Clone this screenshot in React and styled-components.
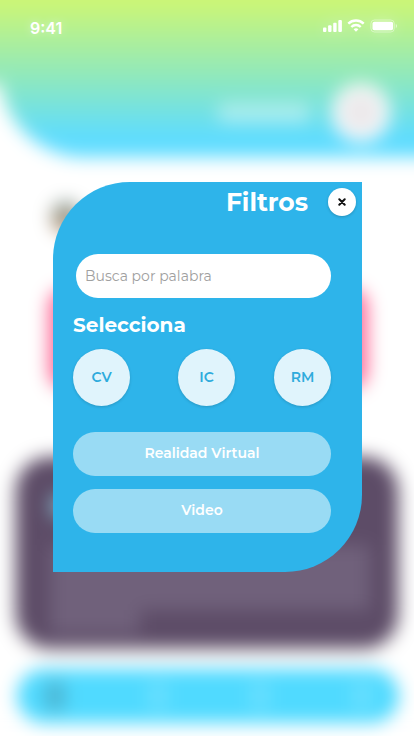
import React from "react";
import styled, { createGlobalStyle } from "styled-components";

const GlobalStyle = createGlobalStyle`
  *, *::before, *::after { box-sizing: border-box; }
  body {
    margin: 0;
    background: #fff;
    font-family: Montserrat, Inter, "Liberation Sans", sans-serif;
  }
  button, input { font: inherit; }
`;

/* The page and the dialog layer share one grid cell. */
const Screen = styled.div`
  display: grid;
  grid-template-columns: minmax(0, 1fr);
  min-height: 100vh;
  overflow: hidden;
`;

/* Bleeds 30px past the window so that the blur stays even at its edges. */
const Page = styled.div`
  grid-area: 1 / 1;
  display: flex;
  flex-direction: column;
  margin: -30px -30px 0;
  background: #fff;
  filter: blur(9px);
`;

const HeaderBand = styled.div`
  display: flex;
  align-items: flex-start;
`;

const HeaderFill = styled.div`
  background: linear-gradient(#cdf674 30px, #8be7c2 112px, #5edcff 168px) top / 100% 187px;
`;

const HeaderBleed = styled(HeaderFill)`
  width: 30px;
  height: 114px;
`;

const PageHeader = styled(HeaderFill)`
  flex: 1;
  display: flex;
  justify-content: flex-end;
  align-items: flex-end;
  gap: 22px;
  height: 187px;
  padding: 0 54px 16px;
  border-bottom-left-radius: 84px;
`;

const HeaderTitle = styled.div`
  width: 92px;
  height: 20px;
  margin-bottom: 18px;
  border-radius: 6px;
  background: rgba(255, 255, 255, 0.4);
`;

const HeaderButton = styled.div`
  width: 58px;
  height: 58px;
  border-radius: 50%;
  background: radial-gradient(#ebe6e8 20%, #f6f8fa 65%);
  box-shadow: 0 3px 6px rgba(255, 255, 255, 0.5);
`;

const Avatar = styled.div`
  width: 30px;
  height: 32px;
  margin: 44px 0 0 81px;
  border-radius: 50%;
  background: linear-gradient(#8fa9a8, #b88c68);
`;

const PinkCard = styled.div`
  height: 99px;
  margin: 56px 77px 0 79px;
  border-radius: 16px;
  background: #ff6896;
  box-shadow: 0 6px 12px rgba(0, 0, 0, 0.05);
`;

const DarkCard = styled.div`
  display: flex;
  flex-direction: column;
  height: 191px;
  margin: 69px 46px 0;
  padding: 36px 28px 14px 34px;
  border-radius: 34px;
  background: #5d4c67;
  box-shadow: 0 2px 8px rgba(0, 0, 0, 0.2);
`;

const Dot = styled.div`
  width: 22px;
  height: 26px;
  border-radius: 50%;
  background: #7fa9bd;
`;

const TextBlock = styled.div`
  width: ${(p) => p.$width};
  height: ${(p) => p.$height}px;
  margin-top: ${(p) => p.$top || 0}px;
  background: #70617b;
`;

const BottomBar = styled.div`
  display: flex;
  align-items: center;
  justify-content: space-between;
  height: 54px;
  margin: 21px 45px 12px 47px;
  padding: 0 28px;
  border-radius: 27px;
  background: #50daff;
`;

const BarIcon = styled.div`
  width: 20px;
  height: 30px;
  border-radius: 8px;
  background: #4db5d2;
`;

const BarMark = styled.div`
  width: 18px;
  height: 26px;
  background: #6be0ff;
`;

const Overlay = styled.div`
  grid-area: 1 / 1;
  z-index: 1;
  display: flex;
  flex-direction: column;
`;

const StatusBar = styled.div`
  display: flex;
  justify-content: space-between;
  align-items: center;
  height: 56px;
  padding: 0 17px 0 30px;
  color: #fff;
`;

const Time = styled.span`
  font: 600 16px/20px Inter, sans-serif;
  text-shadow: 0 0 10px rgba(255, 255, 255, 0.5);
`;

const StatusIcons = styled.svg`
  width: 76px;
  height: 16px;
  margin-bottom: 4px;
  overflow: visible;
  filter: drop-shadow(0 0 8px rgba(255, 255, 255, 0.4));
`;

const Dialog = styled.form`
  margin: 126px 52px 0 53px;
  padding: 6px 31px 39px 20px;
  border-radius: 77px 0 77px 0;
  background: #2eb4ea;
  color: #fff;
`;

const DialogHeader = styled.div`
  display: flex;
  justify-content: flex-end;
  align-items: center;
  gap: 20px;
  height: 28px;
  margin-right: -25px;
`;

const DialogTitle = styled.h1`
  margin: 0;
  font-size: 25px;
  font-weight: 700;
  line-height: 28px;
`;

const CloseButton = styled.button`
  display: grid;
  place-items: center;
  width: 28px;
  height: 28px;
  padding: 0;
  border: 0;
  border-radius: 50%;
  background: #fff;
  box-shadow: 0 1px 3px rgba(0, 0, 0, 0.2);
`;

const SearchInput = styled.input`
  display: block;
  width: calc(100% - 3px);
  height: 44px;
  margin: 38px 0 15px 3px;
  padding: 0 9px;
  border: 0;
  border-radius: 22px;
  background: #fff;
  color: #333;
  font-size: 14px;
  &::placeholder { color: #a0a0a0; opacity: 1; }
`;

const SectionTitle = styled.h2`
  margin: 0 0 12px;
  font-size: 20px;
  font-weight: 700;
  line-height: 24px;
`;

const Categories = styled.div`
  display: grid;
  grid-template-columns: 105fr 96fr 57px;
`;

const CategoryButton = styled.button`
  width: 57px;
  height: 57px;
  padding: 0 0 2px;
  border: 0;
  border-radius: 50%;
  background: #e0f4fc;
  box-shadow: 0 1px 3px rgba(0, 0, 0, 0.16);
  color: #2eabdc;
  font-size: 14px;
  font-weight: 600;
`;

const Kinds = styled.div`
  display: grid;
  gap: 13px;
  margin-top: 26px;
`;

const KindButton = styled.button`
  height: 44px;
  padding: 0 16px 2px;
  border: 0;
  border-radius: 22px;
  background: #99dbf4;
  color: #fff;
  font-size: 14px;
  font-weight: 600;
`;

export default function App() {
  return (
    <>
      <GlobalStyle />
      <Screen>
        <Page aria-hidden="true">
          <HeaderBand>
            <HeaderBleed />
            <PageHeader>
              <HeaderTitle />
              <HeaderButton />
            </PageHeader>
          </HeaderBand>
          <Avatar />
          <PinkCard />
          <DarkCard>
            <Dot />
            <TextBlock $width="100%" $height={66} $top={26} />
            <TextBlock $width="28%" $height={24} />
          </DarkCard>
          <BottomBar>
            <BarIcon />
            <BarMark />
            <BarMark />
            <BarMark />
          </BottomBar>
        </Page>

        <Overlay>
          <StatusBar>
            <Time>9:41</Time>
            <StatusIcons viewBox="0 0 76 16" fill="#fff" aria-hidden="true">
              <rect x="2" y="9.5" width="3.4" height="4.5" rx="1" />
              <rect x="7.1" y="7.2" width="3.4" height="6.8" rx="1" />
              <rect x="12.2" y="4.8" width="3.4" height="9.2" rx="1" />
              <rect x="17.3" y="2" width="3.6" height="12" rx="1" />
              <g fill="none" stroke="#fff" strokeWidth="2.4">
                <path d="M27.3 5.7 A11 11 0 0 1 42.7 5.7" />
                <path d="M30.3 9 A6.7 6.7 0 0 1 39.7 9" />
              </g>
              <path d="M32.6 11.3 A3.6 3.6 0 0 1 37.4 11.3 L35 13.8 Z" />
              <rect
                x="49.9"
                y="2"
                width="23.4"
                height="12"
                rx="3.6"
                fill="none"
                stroke="#fff"
                strokeOpacity="0.4"
              />
              <rect x="51.5" y="3.8" width="20.6" height="8.4" rx="1.8" />
              <path d="M74.8 6 C76.6 6.8 76.6 9.2 74.8 10 Z" fillOpacity="0.5" />
            </StatusIcons>
          </StatusBar>

          <Dialog
            role="dialog"
            aria-labelledby="filters-title"
            onSubmit={(e) => e.preventDefault()}
          >
            <DialogHeader>
              <DialogTitle id="filters-title">Filtros</DialogTitle>
              <CloseButton type="button" aria-label="Cerrar">
                <svg width="8" height="8" viewBox="0 0 8 8" aria-hidden="true">
                  <path
                    d="M1.3 1.3 L6.7 6.7 M6.7 1.3 L1.3 6.7"
                    stroke="#111"
                    strokeWidth="2"
                    strokeLinecap="round"
                  />
                </svg>
              </CloseButton>
            </DialogHeader>
            <SearchInput
              type="text"
              placeholder="Busca por palabra"
              aria-label="Busca por palabra"
            />
            <SectionTitle>Selecciona</SectionTitle>
            <Categories>
              <CategoryButton type="button">CV</CategoryButton>
              <CategoryButton type="button">IC</CategoryButton>
              <CategoryButton type="button">RM</CategoryButton>
            </Categories>
            <Kinds>
              <KindButton type="button">Realidad Virtual</KindButton>
              <KindButton type="button">Video</KindButton>
            </Kinds>
          </Dialog>
        </Overlay>
      </Screen>
    </>
  );
}
